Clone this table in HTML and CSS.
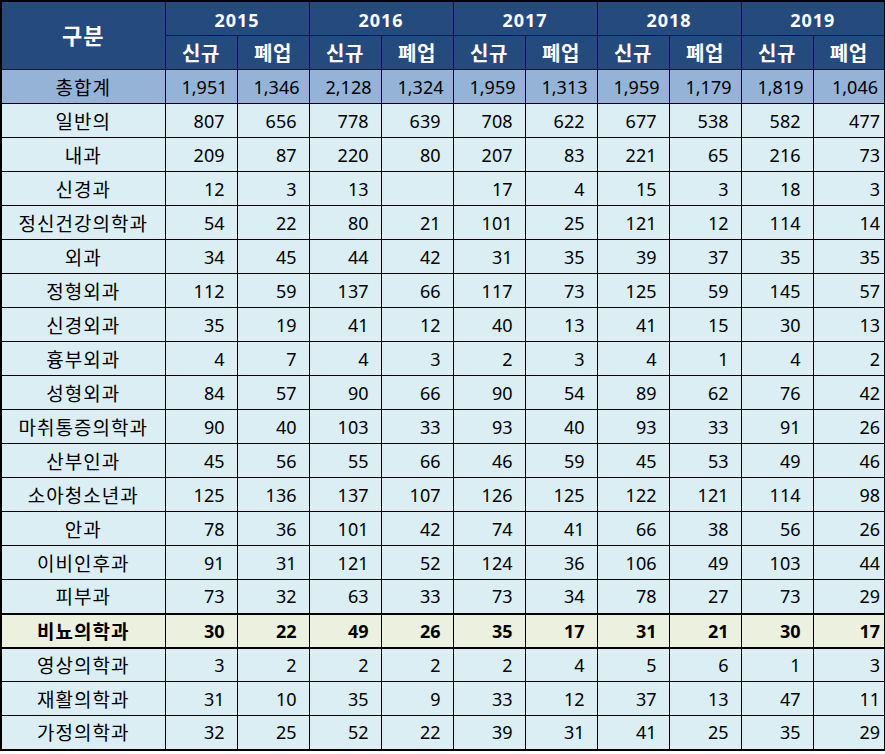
FILE: index.html
```html
<!DOCTYPE html>
<html lang="ko">
<head>
<meta charset="utf-8">
<title>진료과목별 신규·폐업</title>
<link rel="stylesheet" href="styles.css">
</head>
<body>
<table class="stats">
  <colgroup>
    <col class="c-label">
    <col class="c-num"><col class="c-num">
    <col class="c-num"><col class="c-num">
    <col class="c-num"><col class="c-num">
    <col class="c-num"><col class="c-num">
    <col class="c-num"><col class="c-num">
  </colgroup>
  <thead>
    <tr class="h-year">
      <th rowspan="2" class="h-main">구분</th>
      <th colspan="2">2015</th>
      <th colspan="2">2016</th>
      <th colspan="2">2017</th>
      <th colspan="2">2018</th>
      <th colspan="2">2019</th>
    </tr>
    <tr class="h-sub">
      <th>신규</th><th>폐업</th>
      <th>신규</th><th>폐업</th>
      <th>신규</th><th>폐업</th>
      <th>신규</th><th>폐업</th>
      <th>신규</th><th>폐업</th>
    </tr>
  </thead>
  <tbody>
    <tr class="total">
      <td>총합계</td><td>1,951</td><td>1,346</td><td>2,128</td><td>1,324</td><td>1,959</td><td>1,313</td><td>1,959</td><td>1,179</td><td>1,819</td><td>1,046</td>
    </tr>
    <tr><td>일반의</td><td>807</td><td>656</td><td>778</td><td>639</td><td>708</td><td>622</td><td>677</td><td>538</td><td>582</td><td>477</td></tr>
    <tr><td>내과</td><td>209</td><td>87</td><td>220</td><td>80</td><td>207</td><td>83</td><td>221</td><td>65</td><td>216</td><td>73</td></tr>
    <tr><td>신경과</td><td>12</td><td>3</td><td>13</td><td></td><td>17</td><td>4</td><td>15</td><td>3</td><td>18</td><td>3</td></tr>
    <tr><td>정신건강의학과</td><td>54</td><td>22</td><td>80</td><td>21</td><td>101</td><td>25</td><td>121</td><td>12</td><td>114</td><td>14</td></tr>
    <tr><td>외과</td><td>34</td><td>45</td><td>44</td><td>42</td><td>31</td><td>35</td><td>39</td><td>37</td><td>35</td><td>35</td></tr>
    <tr><td>정형외과</td><td>112</td><td>59</td><td>137</td><td>66</td><td>117</td><td>73</td><td>125</td><td>59</td><td>145</td><td>57</td></tr>
    <tr><td>신경외과</td><td>35</td><td>19</td><td>41</td><td>12</td><td>40</td><td>13</td><td>41</td><td>15</td><td>30</td><td>13</td></tr>
    <tr><td>흉부외과</td><td>4</td><td>7</td><td>4</td><td>3</td><td>2</td><td>3</td><td>4</td><td>1</td><td>4</td><td>2</td></tr>
    <tr><td>성형외과</td><td>84</td><td>57</td><td>90</td><td>66</td><td>90</td><td>54</td><td>89</td><td>62</td><td>76</td><td>42</td></tr>
    <tr><td>마취통증의학과</td><td>90</td><td>40</td><td>103</td><td>33</td><td>93</td><td>40</td><td>93</td><td>33</td><td>91</td><td>26</td></tr>
    <tr><td>산부인과</td><td>45</td><td>56</td><td>55</td><td>66</td><td>46</td><td>59</td><td>45</td><td>53</td><td>49</td><td>46</td></tr>
    <tr><td>소아청소년과</td><td>125</td><td>136</td><td>137</td><td>107</td><td>126</td><td>125</td><td>122</td><td>121</td><td>114</td><td>98</td></tr>
    <tr><td>안과</td><td>78</td><td>36</td><td>101</td><td>42</td><td>74</td><td>41</td><td>66</td><td>38</td><td>56</td><td>26</td></tr>
    <tr><td>이비인후과</td><td>91</td><td>31</td><td>121</td><td>52</td><td>124</td><td>36</td><td>106</td><td>49</td><td>103</td><td>44</td></tr>
    <tr><td>피부과</td><td>73</td><td>32</td><td>63</td><td>33</td><td>73</td><td>34</td><td>78</td><td>27</td><td>73</td><td>29</td></tr>
    <tr class="focus"><td>비뇨의학과</td><td>30</td><td>22</td><td>49</td><td>26</td><td>35</td><td>17</td><td>31</td><td>21</td><td>30</td><td>17</td></tr>
    <tr><td>영상의학과</td><td>3</td><td>2</td><td>2</td><td>2</td><td>2</td><td>4</td><td>5</td><td>6</td><td>1</td><td>3</td></tr>
    <tr><td>재활의학과</td><td>31</td><td>10</td><td>35</td><td>9</td><td>33</td><td>12</td><td>37</td><td>13</td><td>47</td><td>11</td></tr>
    <tr><td>가정의학과</td><td>32</td><td>25</td><td>52</td><td>22</td><td>39</td><td>31</td><td>41</td><td>25</td><td>35</td><td>29</td></tr>
  </tbody>
</table>
</body>
</html>
```

FILE: styles.css
```css
html, body {
  margin: 0;
  padding: 0;
  background: #ffffff;
}

.stats {
  border-collapse: collapse;
  table-layout: fixed;
  width: 884px;
  border: 2px solid #000;
  font-family: "Noto Sans", "Noto Sans CJK KR", sans-serif;
  font-size: 18px;
  color: #000;
}

.c-label { width: 164px; }
.c-num { width: 72px; }

.stats th,
.stats td {
  border: 1px solid #000;
  padding: 0;
  white-space: nowrap;
  overflow: hidden;
}

.stats thead th {
  background: #244a7e;
  color: #ffffff;
  font-family: "Noto Sans CJK KR", sans-serif;
  font-weight: 700;
  font-size: 20px;
  text-align: center;
  border-color: #0e1a2c;
}

.stats .h-year th {
  height: 31px;
  padding-top: 2px;
  font-family: "Noto Sans", "Noto Sans CJK KR", sans-serif;
  font-size: 18px;
  letter-spacing: 1px;
}

.stats .h-year .h-main {
  font-family: "Noto Sans CJK KR", sans-serif;
  font-size: 22px;
  letter-spacing: 1px;
  padding-top: 0;
  padding-bottom: 4px;
}

.stats .h-sub th {
  height: 33px;
  letter-spacing: 0.5px;
}

.stats tbody tr {
  height: 34px;
  background: #daeef3;
}

.stats tbody td {
  text-align: right;
  padding-right: 12px;
  line-height: 20px;
}

.stats tbody td:first-child {
  text-align: center;
  padding-right: 0;
  font-family: "Noto Sans CJK KR", sans-serif;
  font-size: 19px;
  letter-spacing: 1px;
}

.stats tbody td:last-child {
  padding-right: 4px;
}

.stats tbody tr.total {
  background: #95b3d7;
}

.stats tbody tr.total td {
  padding-right: 9px;
}

.stats tbody tr.total td:first-child {
  padding-right: 0;
}

.stats tbody tr.total td:last-child {
  padding-right: 6px;
}

.stats tbody tr.focus {
  background: #ebf1de;
  font-weight: 700;
}

.stats tbody tr.focus td {
  border-top: 2px solid #000;
  border-bottom: 2px solid #000;
}
```
